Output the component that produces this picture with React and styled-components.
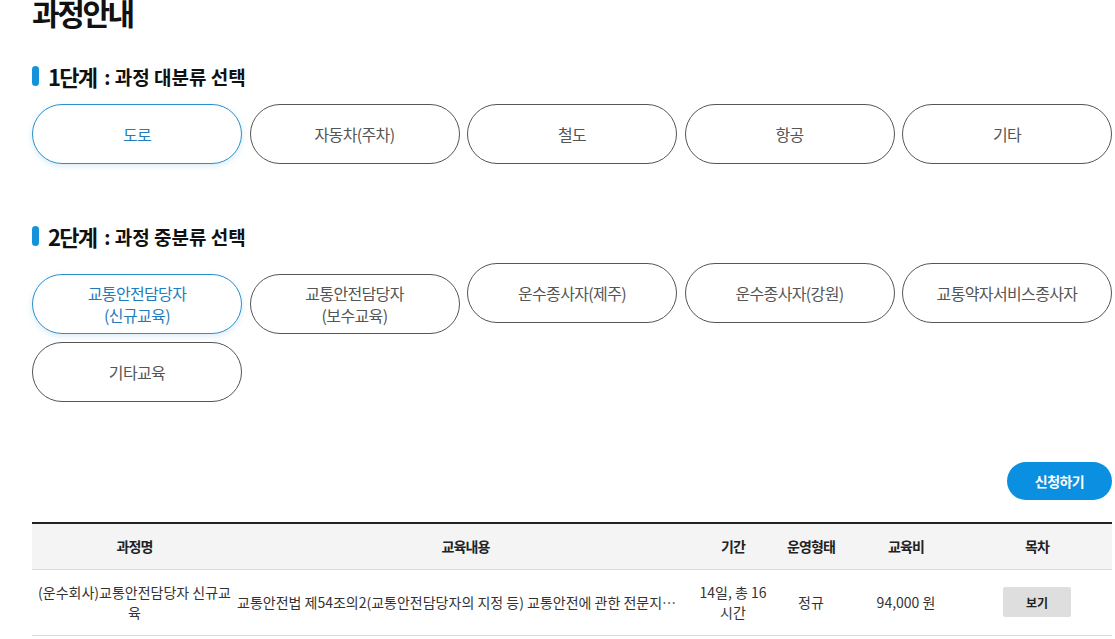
import React from "react";
import styled, { createGlobalStyle } from "styled-components";

const Global = createGlobalStyle`
  html, body { margin: 0; padding: 0; background: #fff; }
  body { font-family: "Noto Sans CJK KR", "Noto Sans", sans-serif; color: #222; overflow: hidden; }
  * { box-sizing: border-box; }
`;

const Page = styled.div`
  width: 1080px;
  margin-left: 32px;
`;

const Title = styled.h1`
  margin: -3px 0 0;
  font-size: 30px;
  line-height: 30px;
  font-weight: 700;
  letter-spacing: -0.08em;
  color: #111;
`;

const StepHeading = styled.h2`
  display: flex;
  align-items: center;
  margin: ${(p) => p.$top}px 0 0;
  height: 24px;
  font-weight: 700;
  color: #111;
  &::before {
    content: "";
    width: 7px;
    height: 20px;
    border-radius: 4px;
    background: #1592dc;
    margin-right: 9px;
  }
`;

const StepNum = styled.span`
  font-size: 22px;
  letter-spacing: -0.08em;
  margin-right: 8px;
`;

const StepLabel = styled.span`
  font-size: 19px;
  letter-spacing: 0;
  white-space: pre;
`;

const OptionGrid = styled.div`
  display: flex;
  flex-wrap: wrap;
  align-items: baseline;
  gap: 8px 7.5px;
  margin-top: ${(p) => p.$top}px;
`;

const Option = styled.button`
  display: flex;
  align-items: center;
  justify-content: center;
  flex-direction: column;
  width: 210px;
  height: 60px;
  padding: 0 10px;
  border-radius: 30px;
  background: #fff;
  border: 1px solid ${(p) => (p.$active ? "#2a90cc" : "#555")};
  box-shadow: ${(p) => (p.$active ? "0 2px 6px rgba(42,144,204,0.18)" : "none")};
  color: ${(p) => (p.$active ? "#1f7dbd" : "#555")};
  font-family: inherit;
  font-size: 16px;
  line-height: 22px;
  letter-spacing: -0.04em;
  text-align: center;
  cursor: pointer;
`;

const ActionBar = styled.div`
  display: flex;
  justify-content: flex-end;
  margin-top: 60px;
`;

const ApplyButton = styled.button`
  width: 105px;
  height: 38px;
  border: 0;
  border-radius: 19px;
  background: #0b8fe0;
  color: #fff;
  font-family: inherit;
  font-size: 14px;
  font-weight: 700;
  letter-spacing: -0.04em;
  cursor: pointer;
`;

const Table = styled.table`
  width: 1080px;
  margin-top: 22px;
  border-collapse: collapse;
  table-layout: fixed;
  border-top: 2px solid #222;
`;

const Th = styled.th`
  height: 46px;
  background: #f4f4f4;
  border-bottom: 1px solid #dcdcdc;
  font-size: 14px;
  font-weight: 700;
  color: #222;
  letter-spacing: -0.06em;
  text-align: center;
  padding: 0;
`;

const Td = styled.td`
  height: 66px;
  border-bottom: 1px solid #dcdcdc;
  font-size: 14px;
  line-height: 20px;
  color: #333;
  letter-spacing: 0;
  text-align: ${(p) => p.$align || "center"};
  padding: ${(p) => p.$pad || "0 4px"};
  white-space: ${(p) => (p.$clip ? "nowrap" : "normal")};
  overflow: hidden;
  text-overflow: ellipsis;
`;

const ViewButton = styled.button`
  width: 68px;
  height: 30px;
  border: 0;
  border-radius: 2px;
  background: #dedede;
  color: #222;
  font-family: inherit;
  font-size: 12px;
  font-weight: 700;
  cursor: pointer;
`;

const categories = ["도로", "자동차(주차)", "철도", "항공", "기타"];
const subCategories = [
  ["교통안전담당자", "(신규교육)"],
  ["교통안전담당자", "(보수교육)"],
  ["운수종사자(제주)"],
  ["운수종사자(강원)"],
  ["교통약자서비스종사자"],
  ["기타교육"],
];

const columns = [
  { label: "과정명", width: 205 },
  { label: "교육내용", width: 457 },
  { label: "기간", width: 78 },
  { label: "운영형태", width: 78 },
  { label: "교육비", width: 112 },
  { label: "목차", width: 150 },
];

export default function App() {
  return (
    <>
      <Global />
      <Page>
        <Title>과정안내</Title>

        <StepHeading $top={37}>
          <StepNum>1단계</StepNum>
          <StepLabel>: 과정 대분류 선택</StepLabel>
        </StepHeading>
        <OptionGrid $top={16}>
          {categories.map((c, i) => (
            <Option key={c} $active={i === 0}>
              {c}
            </Option>
          ))}
        </OptionGrid>

        <StepHeading $top={60}>
          <StepNum>2단계</StepNum>
          <StepLabel>: 과정 중분류 선택</StepLabel>
        </StepHeading>
        <OptionGrid $top={15}>
          {subCategories.map((lines, i) => (
            <Option key={lines.join("")} $active={i === 0}>
              {lines.map((l) => (
                <span key={l}>{l}</span>
              ))}
            </Option>
          ))}
        </OptionGrid>

        <ActionBar>
          <ApplyButton>신청하기</ApplyButton>
        </ActionBar>

        <Table>
          <colgroup>
            {columns.map((c) => (
              <col key={c.label} style={{ width: c.width }} />
            ))}
          </colgroup>
          <thead>
            <tr>
              {columns.map((c) => (
                <Th key={c.label}>{c.label}</Th>
              ))}
            </tr>
          </thead>
          <tbody>
            <tr>
              <Td>(운수회사)교통안전담당자 신규교육</Td>
              <Td $align="left" $clip $pad="0 12px 0 0">
                교통안전법 제54조의2(교통안전담당자의 지정 등) 교통안전에 관한 전문지식과 경험을 갖춘 교통안전담당자의 신규교육
              </Td>
              <Td $pad="0 2px">14일, 총 16 시간</Td>
              <Td>정규</Td>
              <Td>94,000 원</Td>
              <Td>
                <ViewButton>보기</ViewButton>
              </Td>
            </tr>
          </tbody>
        </Table>
      </Page>
    </>
  );
}
